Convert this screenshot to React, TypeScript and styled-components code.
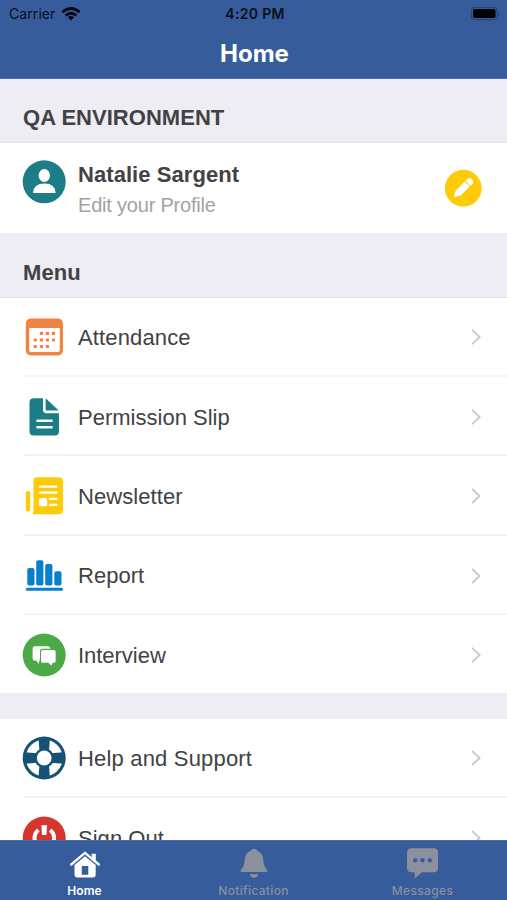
import React from "react";
import styled, { createGlobalStyle } from "styled-components";

const Global = createGlobalStyle`
  * { box-sizing: border-box; }
  body { margin: 0; overflow: hidden; background: #fff; font-family: "Liberation Sans", Arial, sans-serif; color: #424244; }
  svg { display: block; flex: none; }
`;

const Screen = styled.div`
  width: 507px;
  height: 900px;
  display: flex;
  flex-direction: column;
  background: #fff;
`;

const Header = styled.header`
  height: 79px;
  flex: none;
  background: #365c9b;
  border-bottom: 1px solid #4a6bab;
`;

const StatusBar = styled.div`
  height: 27px;
  display: grid;
  grid-template-columns: 1fr 1fr 1fr;
  align-items: center;
  padding: 0 6px 0 9px;
  color: #0a0f19;
  font-family: Inter, sans-serif;
  font-size: 14px;
`;

const Carrier = styled.div`
  display: flex;
  align-items: center;
  gap: 6px;
  letter-spacing: 0.08px;
`;

const Clock = styled.div`
  text-align: center;
  font-weight: 600;
  font-size: 14px;
  letter-spacing: 0.32px;
`;

const Battery = styled.div`
  display: flex;
  justify-content: flex-end;
`;

const Title = styled.h1`
  margin: 0;
  height: 52px;
  padding-left: 2px;
  line-height: 53px;
  text-align: center;
  color: #fff;
  font-family: Inter, sans-serif;
  font-size: 24px;
  font-weight: 700;
`;

const Content = styled.main`
  flex: 1;
  min-height: 0;
  overflow: hidden;
`;

const SectionTitle = styled.h2<{ $height: number; $spacing: number; $top?: number }>`
  margin: 0;
  height: ${(p) => p.$height}px;
  padding: ${(p) => p.$top ?? 13}px 23px 0;
  line-height: 52px;
  background: #eeedf3;
  border-bottom: 1px solid #e5e4e8;
  font-size: 22px;
  font-weight: 700;
  letter-spacing: ${(p) => p.$spacing}px;
`;

const Profile = styled.section`
  height: 90px;
  display: flex;
  padding: 17px 25px 0 22px;
`;

const ProfileText = styled.div`
  flex: 1;
  padding-left: 12px;
`;

const Name = styled.div`
  font-size: 22px;
  line-height: 30px;
  font-weight: 700;
  letter-spacing: 0.06px;
`;

const Subtitle = styled.div`
  font-size: 20px;
  line-height: 30px;
  color: #a2a2a4;
  letter-spacing: -0.2px;
`;

const EditButton = styled.button`
  width: 38px;
  height: 38px;
  margin-top: 9px;
  padding: 0;
  border: 0;
  background: none;
`;

const Row = styled.div`
  height: 79.4px;
  display: flex;
  align-items: center;
  margin-left: 24px;
  padding-right: 25px;
  border-bottom: 2px solid #f4f4f5;

  &:last-child {
    height: 78.1px;
    border-bottom: 0;
  }
`;

const RowIcon = styled.div`
  margin-left: -2px;
  padding-top: 2px;
`;

const RowLabel = styled.div<{ $spacing: number }>`
  flex: 1;
  padding: 3.6px 0 0 12px;
  font-size: 22px;
  line-height: 30px;
  letter-spacing: ${(p) => p.$spacing}px;
`;

const Gap = styled.div`
  height: 25.3px;
  background: #eeedf3;
`;

const TabBar = styled.nav`
  height: 60px;
  flex: none;
  display: grid;
  grid-template-columns: repeat(3, 1fr);
  background: #365c9b;
  border-top: 1px solid #4769a5;
`;

const Tab = styled.div<{ $active?: boolean }>`
  display: flex;
  flex-direction: column;
  align-items: center;
  padding-top: 6px;
  color: ${(p) => (p.$active ? "#fff" : "#8b909d")};
  font-family: Inter, sans-serif;
  font-size: 12px;
  font-weight: ${(p) => (p.$active ? 600 : 500)};
  line-height: 18px;
  letter-spacing: ${(p) => (p.$active ? 0.1 : 0.34)}px;
`;

const TabLabel = styled.span`
  margin-top: 1px;
`;

const Icon = ({ children }: { children: React.ReactNode }) => (
  <svg width="44" height="44" viewBox="0 0 44 44">{children}</svg>
);

const PersonIcon = () => (
  <Icon>
    <circle cx="22.2" cy="21.8" r="21.5" fill="#1c7d87" />
    <ellipse cx="22.3" cy="15.5" rx="5.7" ry="6.5" fill="#fff" />
    <path d="M11 33q.4-9.6 11.4-9.6t11.2 9.6Z" fill="#fff" />
  </Icon>
);

const CalendarIcon = () => (
  <Icon>
    <rect x="3.8" y="3.5" width="37.2" height="37" rx="5" fill="#f18442" />
    <path d="M7.2 13H37.8V35q0 2-2 2H9.2q-2 0-2-2Z" fill="#fff" />
    <g fill="#f18442">
      {[[19.4, 18.4], [25.4, 18.4], [31.4, 18.4], [13.2, 25], [19.4, 25], [25.4, 25], [31.4, 25], [13.2, 31.5], [19.4, 31.5], [25.4, 31.5]].map(([x, y]) => (
        <rect key={`${x}-${y}`} x={x - 1.6} y={y - 1.6} width="3.2" height="3.2" rx=".6" />
      ))}
    </g>
  </Icon>
);

const DocumentIcon = () => (
  <Icon>
    <path d="M11.8 3.3H21V14.8q0 3.4 3.4 3.4H37V36.5q0 4-4 4H11.8q-4.3 0-4.3-4V7.5q0-4.2 4.3-4.2Z" fill="#1c7d87" />
    <path d="M23.6 3.3 36.8 15.6H25q-1.4 0-1.4-1.4Z" fill="#1c7d87" />
    <path d="M15.4 25.8H29.6M15.4 32.3H29.6" stroke="#fff" strokeWidth="2.5" strokeLinecap="round" />
  </Icon>
);

const NewspaperIcon = () => (
  <Icon>
    <path d="M15 3.3H36.5q4.5 0 4.5 4.5V36q0 4.3-4.5 4.3H10.3Q11.5 38.5 11.5 36V6.8q0-3.5 3.5-3.5Z" fill="#ffcb08" />
    <rect x="3.8" y="17" width="4.4" height="20.5" rx="2.2" fill="#ffcb08" />
    <path d="M18 12.7H34.5M18 18.7H34.5M28 24.8H34.5M28 30.8H34.5" stroke="#fff" strokeWidth="2.3" strokeLinecap="round" />
    <rect x="17" y="24" width="8.2" height="8.3" rx="1.5" fill="#fff" />
  </Icon>
);

const ChartIcon = () => (
  <Icon>
    <g fill="#087fcb">
      <rect x="5.3" y="14" width="7.2" height="17.5" rx="1.8" />
      <rect x="14.2" y="6.2" width="7.2" height="25.3" rx="1.8" />
      <rect x="23.2" y="10" width="7.2" height="21.5" rx="1.8" />
      <rect x="32.3" y="17.3" width="7.2" height="14.2" rx="1.8" />
      <rect x="3.8" y="33.7" width="37.2" height="3" rx="1.5" />
    </g>
  </Icon>
);

const ChatIcon = () => (
  <Icon>
    <circle cx="22.2" cy="22" r="21.5" fill="#4ca948" />
    <path d="M13 13.3H26q2.4 0 2.4 2.5v10.5H18L16.4 31 14.8 27.8H13q-2.4 0-2.4-2.4v-9.7q0-2.4 2.4-2.4Z" fill="#fff" />
    <path d="M21 16.4H31.8q2.4 0 2.4 2.4v9.1q0 2.5-2.4 2.5H31L29.6 33.4 26.2 30.4H21q-2.5 0-2.5-2.5V18.8q0-2.4 2.5-2.4Z" fill="#fff" stroke="#4ca948" strokeWidth="1.1" />
  </Icon>
);

const LifeRingIcon = () => (
  <Icon>
    <circle cx="22.2" cy="22" r="21.5" fill="#155276" />
    <circle cx="22.2" cy="22" r="18.5" fill="#fff" />
    <g fill="#155276">
      <path d="M16.5 2.5H27.9L26.5 22H18Z" />
      <path d="M16.5 41.5H27.9L26.5 22H18Z" />
      <path d="M2.7 16.3V27.7L22.2 26.3V17.7Z" />
      <path d="M41.7 16.3V27.7L22.2 26.3V17.7Z" />
      <circle cx="22.2" cy="22" r="9.8" />
    </g>
    <circle cx="22.2" cy="22" r="7.4" fill="#fff" />
  </Icon>
);

const PowerIcon = () => (
  <Icon>
    <circle cx="22.2" cy="22" r="21.5" fill="#d4362d" />
    <path d="M16.4 14A9.8 9.8 0 1 0 28.2 14" fill="none" stroke="#fff" strokeWidth="4" />
    <path d="M19.4 9.3H25.1L24.4 19H20Z" fill="#fff" />
  </Icon>
);

const ChevronIcon = styled.svg`
  margin-top: 2px;
`;

const Chevron = () => (
  <ChevronIcon width="12" height="18" viewBox="0 0 12 18">
    <path d="M2 1.9 9.6 9 2 16.1" fill="none" stroke="#c7c7cb" strokeWidth="1.8" />
  </ChevronIcon>
);

const mainRows = [
  { label: "Attendance", icon: <CalendarIcon />, spacing: 0.14 },
  { label: "Permission Slip", icon: <DocumentIcon />, spacing: 0.01 },
  { label: "Newsletter", icon: <NewspaperIcon />, spacing: 0.07 },
  { label: "Report", icon: <ChartIcon />, spacing: 0.02 },
  { label: "Interview", icon: <ChatIcon />, spacing: -0.03 },
];

const moreRows = [
  { label: "Help and Support", icon: <LifeRingIcon />, spacing: 0.18 },
  { label: "Sign Out", icon: <PowerIcon />, spacing: 0.03 },
];

const Menu = ({ rows }: { rows: typeof mainRows }) => (
  <section>
    {rows.map((r) => (
      <Row key={r.label}>
        <RowIcon>{r.icon}</RowIcon>
        <RowLabel $spacing={r.spacing}>{r.label}</RowLabel>
        <Chevron />
      </Row>
    ))}
  </section>
);

export default function App() {
  return (
    <Screen>
      <Global />
      <Header>
        <StatusBar>
          <Carrier>
            Carrier
            <svg width="20" height="14" viewBox="0 0 20 14" fill="none" stroke="#05080f" strokeWidth="2.7">
              <path d="M1.4 5.1Q10-2.1 18.6 5.1M4.7 8.5Q10 4 15.3 8.5" />
              <path d="M6.8 10.2Q10 7.6 13.2 10.2L10 13.4Z" fill="#05080f" stroke="none" />
            </svg>
          </Carrier>
          <Clock>4:20 PM</Clock>
          <Battery>
            <svg width="31" height="14" viewBox="0 0 31 14">
              <rect x="1.3" y=".3" width="26" height="12.4" rx="3.5" fill="none" stroke="#23406f" strokeWidth="1" />
              <rect x="3" y="2.1" width="22.5" height="8.8" rx="1.7" fill="#000" />
              <path d="M28.5 4.5q2 2 0 4Z" fill="#23406f" />
            </svg>
          </Battery>
        </StatusBar>
        <Title>Home</Title>
      </Header>
      <Content>
        <SectionTitle $height={64} $spacing={0.03}>QA ENVIRONMENT</SectionTitle>
        <Profile>
          <PersonIcon />
          <ProfileText>
            <Name>Natalie Sargent</Name>
            <Subtitle>Edit your Profile</Subtitle>
          </ProfileText>
          <EditButton aria-label="Edit profile">
            <svg width="38" height="38" viewBox="0 0 38 38">
              <circle cx="19.3" cy="19.2" r="18.4" fill="#ffcb08" />
              <path d="M9.7 28.2 11.8 21.4 20.8 12.6 25.8 17.6 16.6 26.4Z" fill="#fff" />
              <path d="M21.6 11.8 23.8 9.8Q25.9 8.3 27.9 10.2L28.6 10.9Q30.4 13 28.7 14.7L26.5 16.8Z" fill="#fff" />
            </svg>
          </EditButton>
        </Profile>
        <SectionTitle $height={64.7} $spacing={0.1} $top={14}>Menu</SectionTitle>
        <Menu rows={mainRows} />
        <Gap />
        <Menu rows={moreRows} />
      </Content>
      <TabBar>
        <Tab $active>
          <svg width="30" height="34" viewBox="0 0 30 34">
            <path d="M1.2 17.5 15 5.8 28.8 17.5" fill="none" stroke="#fff" strokeWidth="2.3" strokeLinecap="round" strokeLinejoin="round" />
            <path d="M21.8 6.8h4v7.3l-4-3.5Z" fill="#fff" />
            <path fillRule="evenodd" d="M4.5 18 15 9.2 25.7 18V27.5q0 3-3 3H7.5q-3 0-3-3ZM11.8 19V27.8h6.5V19Z" fill="#fff" />
          </svg>
          <TabLabel>Home</TabLabel>
        </Tab>
        <Tab>
          <svg width="30" height="34" viewBox="0 0 30 34" fill="#8b909d">
            <path d="M12 3.6Q12.5 1.8 15 1.8t3 1.8q5.9 2.2 6.4 9.9.2 6 3.8 9.2.8 2.3-1.2 2.3H3q-1.9 0-1.2-2.3Q5.4 19.5 5.6 13.5q.5-7.7 6.4-9.9ZM10.7 27.3h8.5q-.7 3.5-4.2 3.5t-4.3-3.5Z" />
          </svg>
          <TabLabel>Notification</TabLabel>
        </Tab>
        <Tab>
          <svg width="32" height="34" viewBox="0 0 32 34">
            <path d="M4.5 1.2H26.5q4.5 0 4.5 4.5V21q0 4.2-4.5 4.2H15L7.7 31.5V25.2H4.5Q0 25.2 0 21V5.7Q0 1.2 4.5 1.2Z" fill="#8b909d" />
            <g fill="#365c9b"><rect x="6.2" y="11.2" width="4" height="4" rx="1.2" /><rect x="13.5" y="11.2" width="4" height="4" rx="1.2" /><rect x="20.8" y="11.2" width="4" height="4" rx="1.2" /></g>
          </svg>
          <TabLabel>Messages</TabLabel>
        </Tab>
      </TabBar>
    </Screen>
  );
}
